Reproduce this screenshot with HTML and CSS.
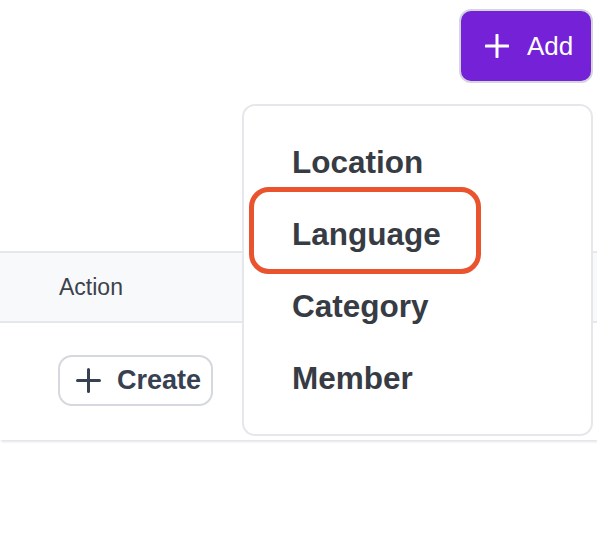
FILE: index.html
```html
<!DOCTYPE html>
<html>
<head>
<meta charset="utf-8">
<link rel="stylesheet" href="styles.css">
</head>
<body>
<div class="page">
  <div class="topbar">
    <button class="add-btn">
      <svg class="plus" width="24" height="24" viewBox="0 0 24 24"><path d="M12 1v22M1 12h22" stroke="#fff" stroke-width="3" stroke-linecap="round"/></svg>
      <span>Add</span>
    </button>
  </div>
  <div class="table">
    <div class="thead">
      <div class="th">Action</div>
    </div>
    <div class="tbody">
      <button class="create-btn">
        <svg class="plus" width="25" height="25" viewBox="0 0 25 25"><path d="M12.5 1.5v22M1.5 12.5h22" stroke="#374151" stroke-width="3" stroke-linecap="round"/></svg>
        <span>Create</span>
      </button>
    </div>
  </div>
  <div class="dropdown">
    <div class="item">Location</div>
    <div class="item">Language</div>
    <div class="item">Category</div>
    <div class="item">Member</div>
    <div class="highlight"></div>
  </div>
</div>
</body>
</html>
```
FILE: styles.css
```css
html, body {
  margin: 0;
  padding: 0;
  background: #fff;
  font-family: "Liberation Sans", Arial, sans-serif;
}
.page {
  position: relative;
  width: 597px;
  height: 548px;
  overflow: hidden;
}
.topbar {
  display: flex;
  justify-content: flex-end;
  padding: 9px 4px 0 0;
  height: 96px;
  box-sizing: border-box;
}
.add-btn {
  display: flex;
  align-items: center;
  gap: 18px;
  height: 74px;
  width: 134px;
  padding: 0 0 0 24px;
  box-sizing: border-box;
  background: #7421d8;
  border: 2px solid #d4d6dc;
  border-radius: 12px;
  color: #fff;
  font-family: "Liberation Sans", Arial, sans-serif;
  font-size: 26px;
}
.table {
  margin-top: 155px;
  width: 700px;
  border-top: 2px solid #e5e7eb;
  box-shadow: 0 3px 2px -1px #e3e5e9;
}
.thead {
  height: 68px;
  background: #f8f9fa;
  border-bottom: 2px solid #e5e7eb;
  display: flex;
  align-items: center;
  padding-left: 59px;
}
.th {
  font-size: 23px;
  color: #3c424c;
}
.tbody {
  height: 117px;
  padding: 32px 0 0 58px;
  box-sizing: border-box;
}
.create-btn {
  display: flex;
  align-items: center;
  gap: 16px;
  height: 51px;
  width: 155px;
  padding: 0 0 0 16px;
  box-sizing: border-box;
  background: #fff;
  border: 2px solid #d5d8de;
  border-radius: 14px;
  color: #374151;
  font-family: "Liberation Sans", Arial, sans-serif;
  font-weight: bold;
  font-size: 27px;
}
.plus { display: block; flex: none; }
.dropdown {
  position: absolute;
  left: 242px;
  top: 104px;
  width: 351px;
  height: 332px;
  box-sizing: border-box;
  background: #fff;
  border: 2px solid #e6e7ea;
  border-radius: 13px;
  padding: 20px 0 0 48px;
}
.item {
  height: 72px;
  line-height: 72px;
  font-size: 31.5px;
  font-weight: bold;
  color: #373c44;
}
.highlight {
  position: absolute;
  left: 5px;
  top: 81px;
  width: 232px;
  height: 87px;
  box-sizing: border-box;
  border: 5px solid #e9532e;
  border-radius: 20px;
}
```
